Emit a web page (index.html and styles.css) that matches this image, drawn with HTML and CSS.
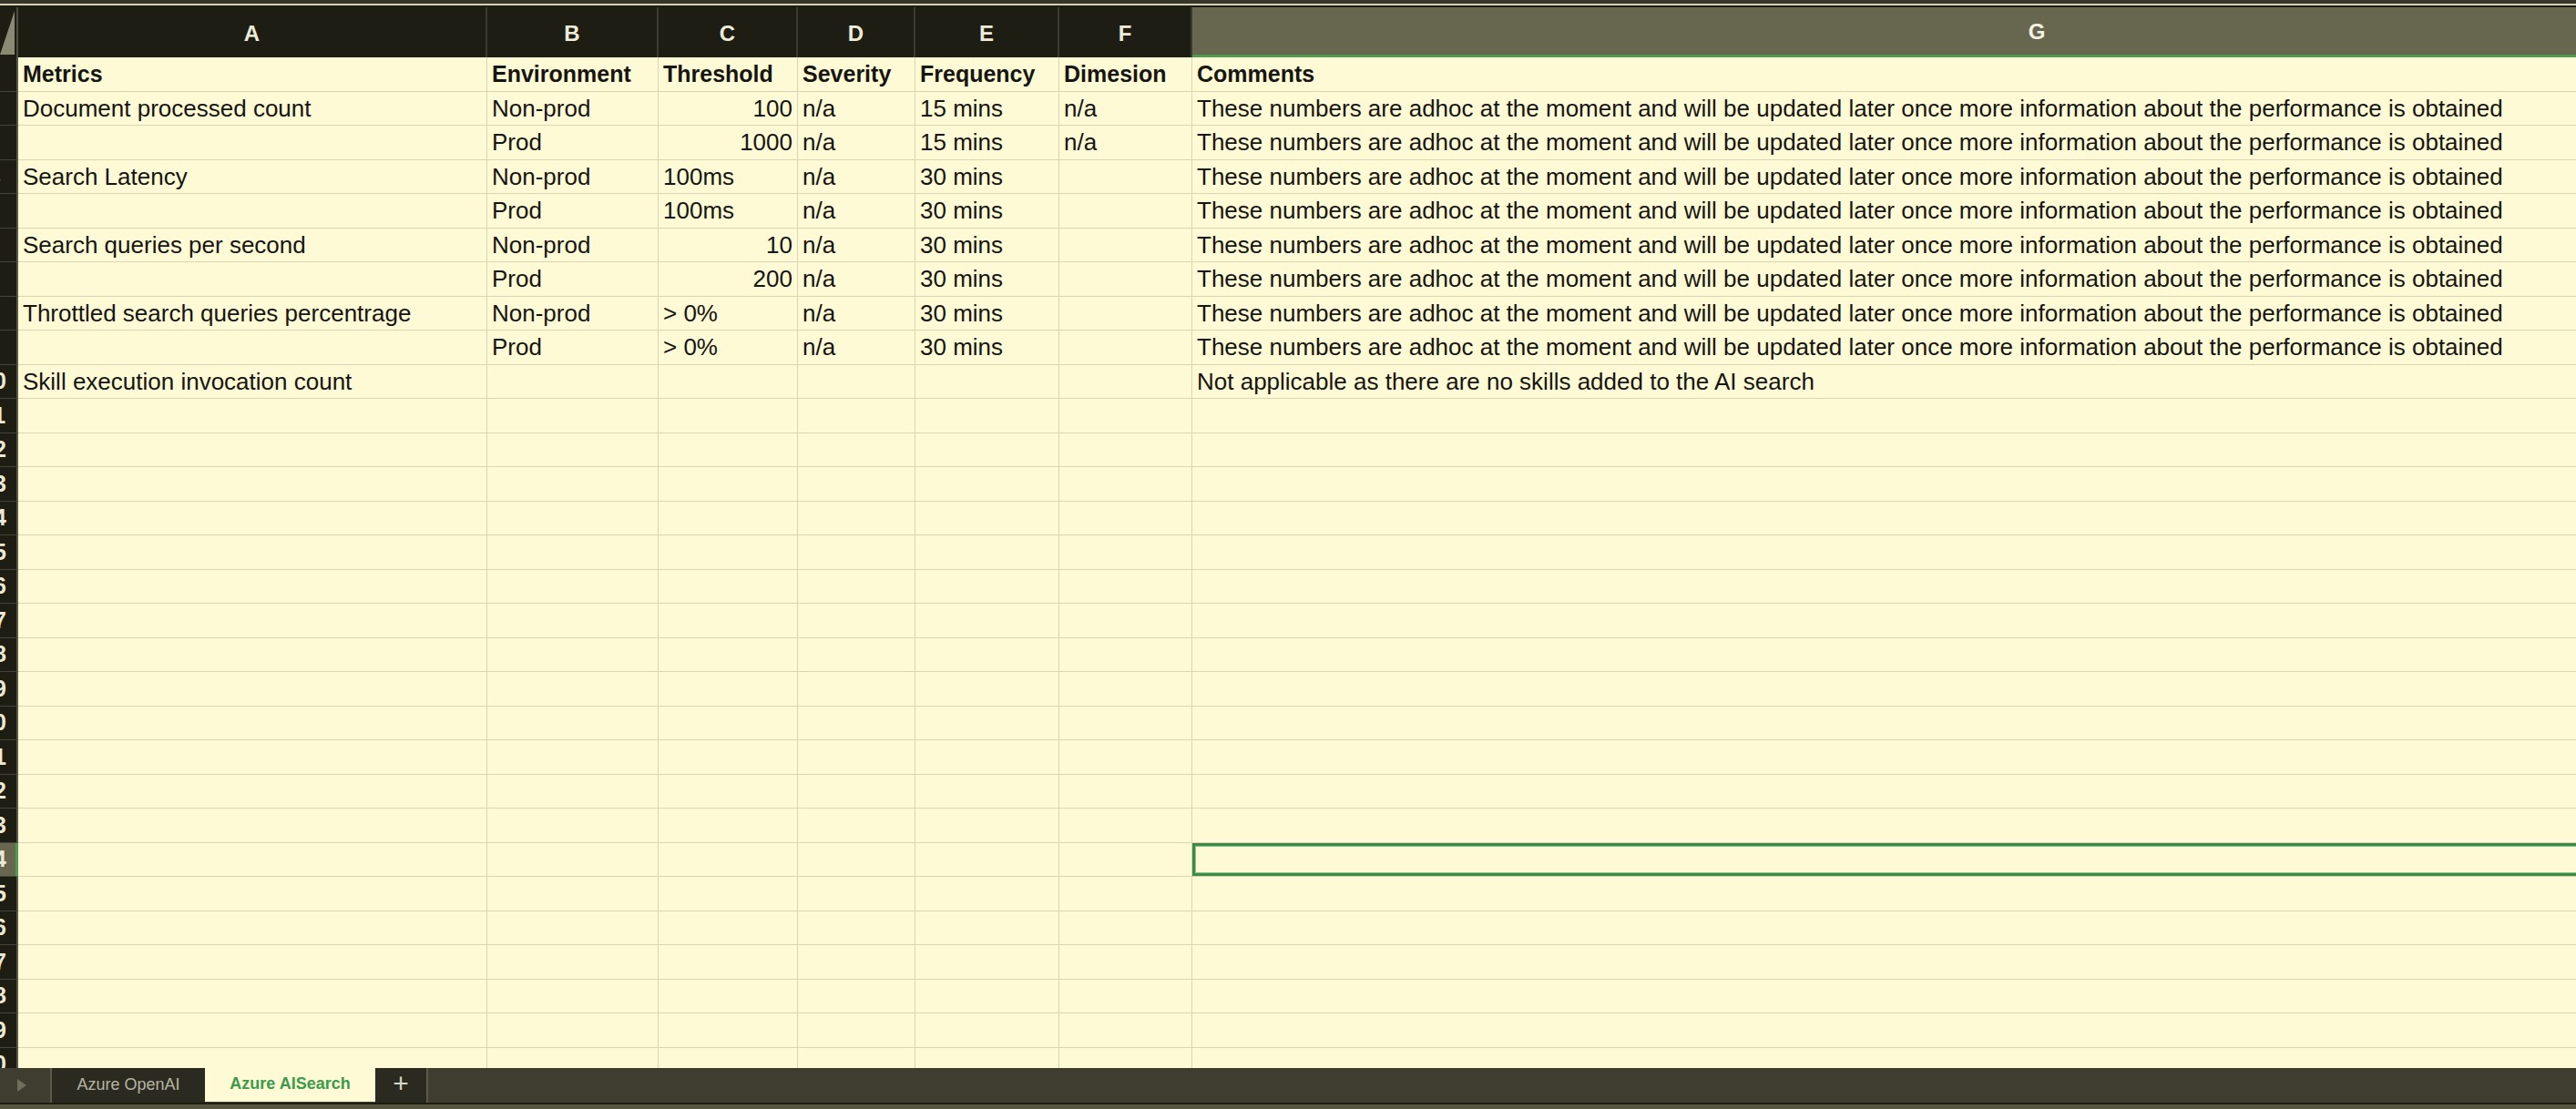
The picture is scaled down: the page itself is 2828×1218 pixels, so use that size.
FILE: index.html
```html
<!DOCTYPE html>
<html>
<head>
<meta charset="utf-8">
<title>Azure AISearch</title>
<link rel="stylesheet" href="styles.css">
</head>
<body>
<div class="app">
  <div class="topstrip"></div>
  <div class="sheet">
    <div class="row head">
      <div class="corner"><svg width="18" height="55" viewBox="0 0 18 55"><polygon points="16,4 16,52 0,52" fill="#8a8974"/></svg></div>
      <div class="colhead">A</div>
      <div class="colhead">B</div>
      <div class="colhead">C</div>
      <div class="colhead">D</div>
      <div class="colhead">E</div>
      <div class="colhead">F</div>
      <div class="colhead sel">G</div>
    </div>

    <div class="row"><div class="rh"><span>1</span></div><div class="c b">Metrics</div><div class="c b">Environment</div><div class="c b">Threshold</div><div class="c b">Severity</div><div class="c b">Frequency</div><div class="c b">Dimesion</div><div class="c b">Comments</div></div>
    <div class="row"><div class="rh"><span>2</span></div><div class="c">Document processed count</div><div class="c">Non-prod</div><div class="c r">100</div><div class="c">n/a</div><div class="c">15 mins</div><div class="c">n/a</div><div class="c">These numbers are adhoc at the moment and will be updated later once more information about the performance is obtained</div></div>
    <div class="row"><div class="rh"><span>3</span></div><div class="c"></div><div class="c">Prod</div><div class="c r">1000</div><div class="c">n/a</div><div class="c">15 mins</div><div class="c">n/a</div><div class="c">These numbers are adhoc at the moment and will be updated later once more information about the performance is obtained</div></div>
    <div class="row"><div class="rh"><span>4</span></div><div class="c">Search Latency</div><div class="c">Non-prod</div><div class="c">100ms</div><div class="c">n/a</div><div class="c">30 mins</div><div class="c"></div><div class="c">These numbers are adhoc at the moment and will be updated later once more information about the performance is obtained</div></div>
    <div class="row"><div class="rh"><span>5</span></div><div class="c"></div><div class="c">Prod</div><div class="c">100ms</div><div class="c">n/a</div><div class="c">30 mins</div><div class="c"></div><div class="c">These numbers are adhoc at the moment and will be updated later once more information about the performance is obtained</div></div>
    <div class="row"><div class="rh"><span>6</span></div><div class="c">Search queries per second</div><div class="c">Non-prod</div><div class="c r">10</div><div class="c">n/a</div><div class="c">30 mins</div><div class="c"></div><div class="c">These numbers are adhoc at the moment and will be updated later once more information about the performance is obtained</div></div>
    <div class="row"><div class="rh"><span>7</span></div><div class="c"></div><div class="c">Prod</div><div class="c r">200</div><div class="c">n/a</div><div class="c">30 mins</div><div class="c"></div><div class="c">These numbers are adhoc at the moment and will be updated later once more information about the performance is obtained</div></div>
    <div class="row"><div class="rh"><span>8</span></div><div class="c">Throttled search queries percentrage</div><div class="c">Non-prod</div><div class="c">&gt; 0%</div><div class="c">n/a</div><div class="c">30 mins</div><div class="c"></div><div class="c">These numbers are adhoc at the moment and will be updated later once more information about the performance is obtained</div></div>
    <div class="row"><div class="rh"><span>9</span></div><div class="c"></div><div class="c">Prod</div><div class="c">&gt; 0%</div><div class="c">n/a</div><div class="c">30 mins</div><div class="c"></div><div class="c">These numbers are adhoc at the moment and will be updated later once more information about the performance is obtained</div></div>
    <div class="row"><div class="rh"><span>10</span></div><div class="c">Skill execution invocation count</div><div class="c"></div><div class="c"></div><div class="c"></div><div class="c"></div><div class="c"></div><div class="c">Not applicable as there are no skills added to the AI search</div></div>
    <div class="row"><div class="rh"><span>11</span></div><div class="c"></div><div class="c"></div><div class="c"></div><div class="c"></div><div class="c"></div><div class="c"></div><div class="c"></div></div>
    <div class="row"><div class="rh"><span>12</span></div><div class="c"></div><div class="c"></div><div class="c"></div><div class="c"></div><div class="c"></div><div class="c"></div><div class="c"></div></div>
    <div class="row"><div class="rh"><span>13</span></div><div class="c"></div><div class="c"></div><div class="c"></div><div class="c"></div><div class="c"></div><div class="c"></div><div class="c"></div></div>
    <div class="row"><div class="rh"><span>14</span></div><div class="c"></div><div class="c"></div><div class="c"></div><div class="c"></div><div class="c"></div><div class="c"></div><div class="c"></div></div>
    <div class="row"><div class="rh"><span>15</span></div><div class="c"></div><div class="c"></div><div class="c"></div><div class="c"></div><div class="c"></div><div class="c"></div><div class="c"></div></div>
    <div class="row"><div class="rh"><span>16</span></div><div class="c"></div><div class="c"></div><div class="c"></div><div class="c"></div><div class="c"></div><div class="c"></div><div class="c"></div></div>
    <div class="row"><div class="rh"><span>17</span></div><div class="c"></div><div class="c"></div><div class="c"></div><div class="c"></div><div class="c"></div><div class="c"></div><div class="c"></div></div>
    <div class="row"><div class="rh"><span>18</span></div><div class="c"></div><div class="c"></div><div class="c"></div><div class="c"></div><div class="c"></div><div class="c"></div><div class="c"></div></div>
    <div class="row"><div class="rh"><span>19</span></div><div class="c"></div><div class="c"></div><div class="c"></div><div class="c"></div><div class="c"></div><div class="c"></div><div class="c"></div></div>
    <div class="row"><div class="rh"><span>20</span></div><div class="c"></div><div class="c"></div><div class="c"></div><div class="c"></div><div class="c"></div><div class="c"></div><div class="c"></div></div>
    <div class="row"><div class="rh"><span>21</span></div><div class="c"></div><div class="c"></div><div class="c"></div><div class="c"></div><div class="c"></div><div class="c"></div><div class="c"></div></div>
    <div class="row"><div class="rh"><span>22</span></div><div class="c"></div><div class="c"></div><div class="c"></div><div class="c"></div><div class="c"></div><div class="c"></div><div class="c"></div></div>
    <div class="row"><div class="rh"><span>23</span></div><div class="c"></div><div class="c"></div><div class="c"></div><div class="c"></div><div class="c"></div><div class="c"></div><div class="c"></div></div>
    <div class="row"><div class="rh active"><span>24</span></div><div class="c"></div><div class="c"></div><div class="c"></div><div class="c"></div><div class="c"></div><div class="c"></div><div class="c selected"></div></div>
    <div class="row"><div class="rh"><span>25</span></div><div class="c"></div><div class="c"></div><div class="c"></div><div class="c"></div><div class="c"></div><div class="c"></div><div class="c"></div></div>
    <div class="row"><div class="rh"><span>26</span></div><div class="c"></div><div class="c"></div><div class="c"></div><div class="c"></div><div class="c"></div><div class="c"></div><div class="c"></div></div>
    <div class="row"><div class="rh"><span>27</span></div><div class="c"></div><div class="c"></div><div class="c"></div><div class="c"></div><div class="c"></div><div class="c"></div><div class="c"></div></div>
    <div class="row"><div class="rh"><span>28</span></div><div class="c"></div><div class="c"></div><div class="c"></div><div class="c"></div><div class="c"></div><div class="c"></div><div class="c"></div></div>
    <div class="row"><div class="rh"><span>29</span></div><div class="c"></div><div class="c"></div><div class="c"></div><div class="c"></div><div class="c"></div><div class="c"></div><div class="c"></div></div>
    <div class="row"><div class="rh"><span>30</span></div><div class="c"></div><div class="c"></div><div class="c"></div><div class="c"></div><div class="c"></div><div class="c"></div><div class="c"></div></div>
  </div>

  <div class="tabbar">
    <div class="nav"><svg width="12" height="16" viewBox="0 0 12 16"><polygon points="1,1 11,8 1,15" fill="#6f6e5c"/></svg></div>
    <div class="tab">Azure OpenAI</div>
    <div class="tab current">Azure AISearch</div>
    <div class="tab add">+</div>
  </div>
  <div class="bottomline"></div>
  <div class="statusbar"></div>
</div>
</body>
</html>
```

FILE: styles.css
```css
html, body {
  margin: 0;
  padding: 0;
  background: #3e3d30;
  overflow: hidden;
}

.app {
  width: 2828px;
  height: 1218px;
  display: flex;
  flex-direction: column;
  overflow: hidden;
  font-family: "Liberation Sans", Arial, sans-serif;
}

.topstrip {
  height: 4px;
  background: #36352a;
  border-bottom: 2px solid #d3d0b6;
  flex: none;
  box-shadow: 0 2px 0 #1e1d14;
  margin-bottom: 2px;
}

.sheet {
  height: 1165px;
  flex: none;
  overflow: hidden;
  background: #fefad5;
}

.row {
  display: grid;
  grid-template-columns: 20px 515px 188px 153px 129px 158px 146px 1856px;
  height: 37.5px;
  width: 3165px;
}

.row.head {
  height: 55px;
  background: #1e1d14;
}

.corner {
  background: #1e1d14;
  border-right: 2px solid #4d4c40;
  box-sizing: border-box;
  display: flex;
  align-items: center;
}

.colhead {
  box-sizing: border-box;
  border-right: 2px solid #3b3a2f;
  color: #eeecd8;
  font-size: 24px;
  font-weight: bold;
  display: flex;
  align-items: center;
  justify-content: center;
  padding-top: 2px;
}

.colhead.sel {
  background: #67664f;
  border-bottom: 3px solid #4e9c52;
  color: #f4f2e2;
}

.rh {
  box-sizing: border-box;
  background: #1e1d14;
  border-right: 2px solid #5a594b;
  border-bottom: 1px solid #44433a;
  overflow: hidden;
  display: flex;
  align-items: center;
  color: #ecead6;
  font-size: 25px;
  font-weight: bold;
}

.rh span {
  flex: none;
  width: 40px;
  margin-left: -27px;
  text-align: center;
}

.rh.active {
  background: #67664f;
  border-right: 3px solid #4e9c52;
}

.c {
  box-sizing: border-box;
  border-right: 1.5px solid #dad5b5;
  border-bottom: 1.5px solid #dad5b5;
  padding: 1px 5px 0 5px;
  font-size: 26px;
  color: #161510;
  white-space: nowrap;
  display: flex;
  align-items: center;
  overflow: visible;
}

.c.b {
  font-weight: bold;
  font-size: 25px;
}

.c.r {
  justify-content: flex-end;
}

.c.selected {
  box-shadow: inset 0 0 0 3px #3f8b43, inset 0 0 0 4px #8cc48c;
}

.tabbar {
  height: 38px;
  flex: none;
  display: flex;
  align-items: stretch;
  background: #3e3d30;
}

.nav {
  box-sizing: border-box;
  width: 57px;
  border-right: 2px solid #5c5b4b;
  display: flex;
  align-items: center;
  justify-content: center;
  padding-right: 8px;
}

.tab {
  display: flex;
  align-items: center;
  justify-content: center;
  font-size: 18px;
  color: #b7b5a2;
  background: #2b2a20;
  width: 168px;
  padding-bottom: 2px;
  box-sizing: border-box;
}

.tab.current {
  width: 187px;
  background: #fefad5;
  color: #3d9a4b;
  font-weight: bold;
  margin-bottom: 1px;
}

.tab.add {
  width: 58px;
  font-size: 30px;
  color: #d8d6c4;
  border-right: 2px solid #5c5b4b;
  padding-bottom: 4px;
}

.bottomline {
  height: 2px;
  flex: none;
  background: #1e1d14;
}

.statusbar {
  height: 5px;
  flex: none;
  background: #57563f;
}
```
